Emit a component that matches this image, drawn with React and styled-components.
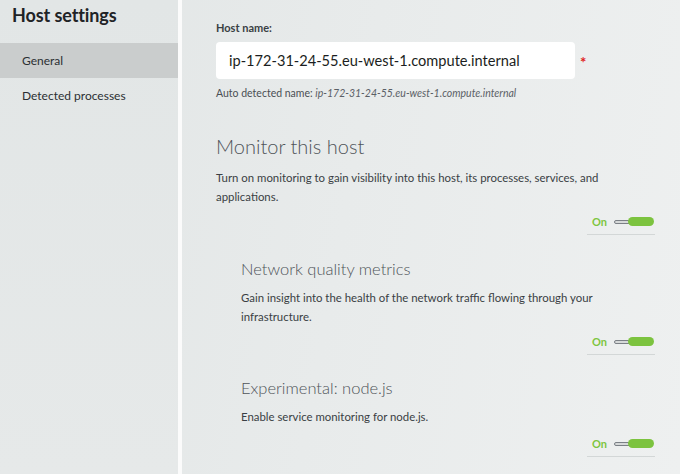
import styled, { createGlobalStyle } from 'styled-components';

const GlobalStyle = createGlobalStyle`
  html, body {
    margin: 0;
    padding: 0;
    height: 100%;
  }
  body {
    font-family: Lato, "Open Sans", sans-serif;
    background: #e6e9e9;
    overflow: hidden;
  }
`;

const Page = styled.div`
  display: flex;
  width: 680px;
  height: 474px;
  background: linear-gradient(100deg, #e1e5e5 0%, #e8ebeb 50%, #eef0f0 100%);
`;

const Sidebar = styled.aside`
  width: 178px;
  flex-shrink: 0;
  border-right: 4px solid #fbfbfb;
  background: linear-gradient(180deg, #e2e6e6 0%, #e6e9e9 100%);
`;

const SideTitle = styled.h1`
  margin: 0;
  padding: 4px 12px 0;
  height: 43px;
  box-sizing: border-box;
  font-size: 18px;
  font-weight: 700;
  color: #1f2326;
  letter-spacing: -0.1px;
`;

const NavItem = styled.div`
  height: 35px;
  display: flex;
  align-items: center;
  padding-left: 22px;
  font-size: 12px;
  color: #2b2f33;
  background: ${p => (p.$active ? '#cacdcd' : 'transparent')};
`;

const Main = styled.main`
  flex: 1;
  padding: 21px 0 0 34px;
`;

const FieldLabel = styled.div`
  font-size: 11px;
  font-weight: 700;
  color: #3a3f44;
  margin-bottom: 8px;
`;

const InputRow = styled.div`
  display: flex;
  align-items: center;
  gap: 5px;
`;

const TextInput = styled.div`
  width: 346px;
  height: 37px;
  padding-left: 13px;
  display: flex;
  align-items: center;
  background: #ffffff;
  border-radius: 4px;
  font-size: 14.6px;
  color: #1b1e21;
`;

const Required = styled.span`
  color: #e0201c;
  font-size: 15px;
  font-weight: 700;
  margin-top: 2px;
`;

const Hint = styled.div`
  margin-top: 8px;
  font-size: 10.5px;
  color: #4a4f54;

  em {
    color: #5b6066;
  }
`;

const Section = styled.section`
  width: ${p => (p.$nested ? '415px' : '440px')};
  margin-left: ${p => (p.$nested ? '25px' : '0')};
  margin-top: ${p => p.$top}px;
`;

const SectionTitle = styled.h2`
  margin: 0;
  font-size: ${p => (p.$nested ? '16.5px' : '20px')};
  font-weight: 300;
  color: #4f5459;
  line-height: 1.2;
`;

const Description = styled.p`
  margin: ${p => (p.$nested ? '8px' : '10px')} 0 0;
  max-width: 400px;
  font-size: 11.4px;
  line-height: 19px;
  color: #3a3f44;
`;

const ToggleWrap = styled.div`
  display: flex;
  justify-content: flex-end;
  margin-top: ${p => p.$top}px;
  padding-right: 1px;
`;

const Toggle = styled.div`
  width: 68px;
  box-sizing: border-box;
  display: flex;
  align-items: center;
  gap: 7px;
  padding: 0 0 6px 5px;
  border-bottom: 1px solid #d3d7d7;
`;

const ToggleLabel = styled.span`
  font-size: 11px;
  font-weight: 700;
  color: #7dc540;
`;

const Switch = styled.span`
  position: relative;
  display: inline-block;
  width: 40px;
  height: 9px;

  &::before {
    content: '';
    position: absolute;
    left: 0;
    top: 3px;
    width: 16px;
    height: 2px;
    background: #d6d9d9;
    border: 1px solid #7b8086;
    border-radius: 2px;
  }

  &::after {
    content: '';
    position: absolute;
    right: 0;
    top: 0;
    width: 26px;
    height: 9px;
    background: #7cc33f;
    border-radius: 5px;
  }
`;

function OnToggle({ top }) {
  return (
    <ToggleWrap $top={top}>
      <Toggle>
        <ToggleLabel>On</ToggleLabel>
        <Switch />
      </Toggle>
    </ToggleWrap>
  );
}

export default function App() {
  const host = 'ip-172-31-24-55.eu-west-1.compute.internal';
  return (
    <>
      <GlobalStyle />
      <Page>
        <Sidebar>
          <SideTitle>Host settings</SideTitle>
          <NavItem $active>General</NavItem>
          <NavItem>Detected processes</NavItem>
        </Sidebar>
        <Main>
          <FieldLabel>Host name:</FieldLabel>
          <InputRow>
            <TextInput>{host}</TextInput>
            <Required>*</Required>
          </InputRow>
          <Hint>
            Auto detected name: <em>{host}</em>
          </Hint>

          <Section $top={35}>
            <SectionTitle>Monitor this host</SectionTitle>
            <Description>
              Turn on monitoring to gain visibility into this host, its processes, services, and
              applications.
            </Description>
            <OnToggle top={9} />
          </Section>

          <Section $nested $top={25}>
            <SectionTitle $nested>Network quality metrics</SectionTitle>
            <Description $nested>
              Gain insight into the health of the network traffic flowing through your
              infrastructure.
            </Description>
            <OnToggle top={9} />
          </Section>

          <Section $nested $top={24}>
            <SectionTitle $nested>Experimental: node.js</SectionTitle>
            <Description $nested>Enable service monitoring for node.js.</Description>
            <OnToggle top={11} />
          </Section>
        </Main>
      </Page>
    </>
  );
}
